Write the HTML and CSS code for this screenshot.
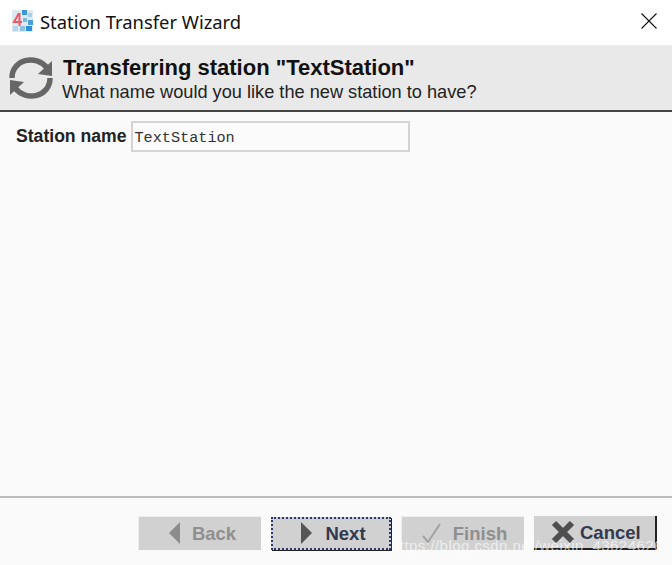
FILE: index.html
```html
<!DOCTYPE html>
<html lang="en">
<head>
    <meta charset="utf-8" />
    <title>Station Transfer Wizard</title>
    <link rel="stylesheet" href="styles.css">
</head>
<body>
    <div class="wizard">
        <div class="title-bar">
            <svg class="app-icon" width="21" height="22" viewBox="0 0 21 22">
                <rect width="21" height="22" fill="#dfe9f1"/>
                <rect x="10" y="0" width="5" height="5" fill="#3d97d8"/>
                <rect x="16" y="3" width="4" height="4" fill="#a9cfe8"/>
                <rect x="11" y="8" width="4" height="4" fill="#7fb8de"/>
                <rect x="16" y="10" width="5" height="5" fill="#4a9ed9"/>
                <rect x="8" y="16" width="5" height="5" fill="#8fc0e2"/>
                <rect x="14" y="16" width="6" height="5" fill="#2f8fd3"/>
                <rect x="1" y="16" width="5" height="5" fill="#b5d5ea"/>
                <path d="M7 3 L2 12 H10 M7.500 3 V16" fill="none" stroke="#ec5a66" stroke-width="2"/>
            </svg>
            <span class="title-text">Station Transfer Wizard</span>
            <svg class="close-icon" width="16" height="16" viewBox="0 0 16 16">
                <path d="M0.500 0.500 L15.500 15.500 M15.500 0.500 L0.500 15.500" stroke="#111" stroke-width="1.100" fill="none"/>
            </svg>
        </div>

        <div class="header">
            <svg class="sync-icon" width="46" height="48" viewBox="0 0 46 48">
                <path d="M4 24 C4 5 28 0 39 14" fill="none" stroke="#666" stroke-width="5.500"/>
                <path d="M44 7 L44 22 L30 20 Z" fill="#666"/>
                <path d="M42 24 C42 43 18 48 7 34" fill="none" stroke="#666" stroke-width="5.500"/>
                <path d="M2 41 L2 26 L16 28 Z" fill="#666"/>
            </svg>
            <div class="header-text">
                <div class="header-title">Transferring station "TextStation"</div>
                <div class="header-sub">What name would you like the new station to have?</div>
            </div>
        </div>

        <div class="content">
            <label class="field-label" for="stationName">Station name</label>
            <input class="field-input" id="stationName" type="text" value="TextStation">
        </div>

        <div class="footer">
            <button class="btn disabled" type="button">
                <svg width="14" height="22" viewBox="0 0 14 22"><path d="M13 0 V22 L2 11 Z" fill="#8c8c8c"/></svg>
                <span>Back</span>
            </button>
            <button class="btn focused" type="button">
                <svg width="14" height="22" viewBox="0 0 14 22"><path d="M1 0 V22 L12 11 Z" fill="#555"/></svg>
                <span>Next</span>
            </button>
            <button class="btn disabled" type="button">
                <svg width="20" height="20" viewBox="0 0 20 20"><path d="M1 13 L6 19 L18 1" fill="none" stroke="#a2a2a2" stroke-width="2"/></svg>
                <span>Finish</span>
            </button>
            <button class="btn raised" type="button">
                <svg width="24" height="24" viewBox="0 0 24 24"><path d="M3 3 L21 21 M21 3 L3 21" stroke="#4f4f4f" stroke-width="6" fill="none"/></svg>
                <span>Cancel</span>
            </button>
        </div>

        <div class="watermark">https://blog.csdn.net/weixin_43624626</div>
    </div>
</body>
</html>
```

FILE: styles.css
```css
:root {
    --panel-background: #fafafa;
    --header-background: #e9e9e9;
    --button-color: #d1d1d1;
    --font-color: #111;
    --disabled-color: #8f8f8f;
}

html, body {
    margin: 0;
    height: 100%;
}

body {
    font-family: 'Liberation Sans', Arial, sans-serif;
    background-color: var(--panel-background);
    overflow: hidden;
}

.wizard {
    position: relative;
    display: flex;
    flex-direction: column;
    width: 672px;
    height: 565px;
}

.title-bar {
    display: flex;
    align-items: center;
    height: 45px;
    padding: 0 14px 3px 12px;
    box-sizing: border-box;
    background-color: #fff;
}

.app-icon {
    margin-right: 7px;
}

.title-text {
    flex: 1;
    font-family: 'Noto Sans', sans-serif;
    font-size: 18.400px;
    color: #111;
}

.close-icon {
    margin-right: 1px;
}

.header {
    display: flex;
    align-items: center;
    height: 67px;
    padding-left: 8px;
    box-sizing: border-box;
    background-color: var(--header-background);
    border-bottom: 2px solid #444;
}

.sync-icon {
    margin-right: 9px;
}

.header-title {
    font-size: 22px;
    font-weight: bold;
    line-height: 25px;
    padding-top: 3px;
    color: var(--font-color);
}

.header-sub {
    font-size: 18.200px;
    line-height: 24px;
    margin-left: -1px;
    color: #222;
}

.content {
    flex: 1;
    display: flex;
    align-items: flex-start;
    padding: 8px 0 0 16px;
    border-bottom: 2px solid #bcbcbc;
}

.field-label {
    font-size: 17.600px;
    font-weight: bold;
    line-height: 32px;
    margin-right: 5px;
    color: #222;
}

.field-input {
    width: 279px;
    height: 31px;
    margin-top: 1px;
    padding: 2px 1px 0;
    box-sizing: border-box;
    border: 2px solid #d4d4d4;
    background-color: #fbfbfb;
    font-family: 'Liberation Mono', monospace;
    font-size: 15.200px;
    color: #333;
}

.footer {
    display: flex;
    align-items: center;
    justify-content: flex-end;
    gap: 10px;
    height: 67px;
    padding: 3px 15px 0 0;
    box-sizing: border-box;
}

.btn {
    display: flex;
    align-items: center;
    justify-content: center;
    gap: 11px;
    width: 123px;
    height: 34px;
    padding: 2px 0 0 4px;
    box-sizing: border-box;
    border: none;
    background-color: var(--button-color);
    font-family: 'Liberation Sans', Arial, sans-serif;
    font-size: 18.500px;
    font-weight: bold;
    color: #333;
}

.btn svg {
    margin-top: -2px;
}

.btn.disabled {
    color: var(--disabled-color);
    box-shadow: inset 1px 1px 0 #eee;
}

.btn.focused {
    width: 120px;
    height: 33px;
    border: 2px dotted #2b3a6b;
    box-shadow: 1px 1px 0 #222;
    color: #33394f;
}

.btn.raised {
    justify-content: flex-start;
    padding-left: 17px;
    gap: 5px;
    border-right: 2px solid #222;
    border-bottom: 2px solid #222;
    color: #33394f;
}

.watermark {
    position: absolute;
    left: 391px;
    top: 537px;
    font-size: 15px;
    letter-spacing: 0.450px;
    color: rgba(255, 255, 255, 0.65);
    white-space: nowrap;
}
```
